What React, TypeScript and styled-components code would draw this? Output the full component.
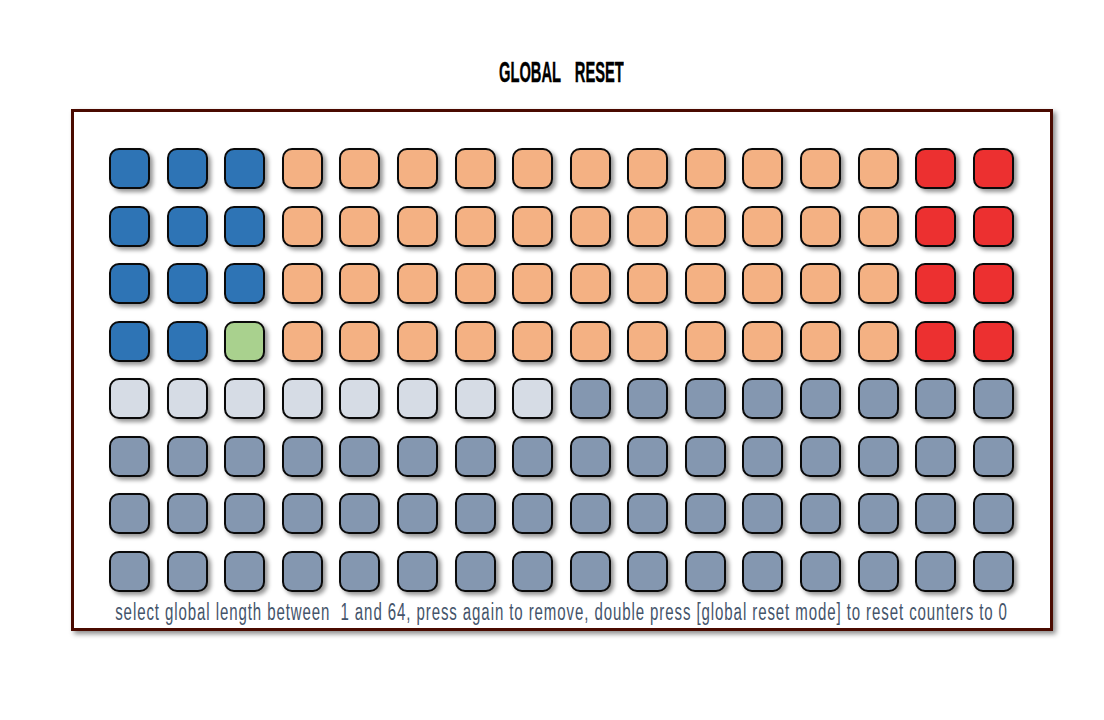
import React from "react";
import styled, { createGlobalStyle } from "styled-components";

const Global = createGlobalStyle`
  html, body { margin: 0; padding: 0; background: #fff; }
  #root { width: 1104px; height: 720px; overflow: hidden; }
`;

const Page = styled.main`
  width: 1104px;
  height: 720px;
  display: flex;
  flex-direction: column;
  align-items: center;
  padding: 57px 52px 0 71px;
  box-sizing: border-box;
`;

const Title = styled.h1`
  margin: 0 0 22px;
  height: 30px;
  line-height: 30px;
  font-family: "Liberation Sans Narrow", "Liberation Sans", sans-serif;
  font-size: 30px;
  font-weight: 700;
  color: #000;
  white-space: pre;
  word-spacing: 6px;
  -webkit-text-stroke: 0.4px #000;
  transform: scaleX(0.49);
`;

const Frame = styled.section`
  width: 982px;
  height: 522px;
  box-sizing: border-box;
  border: 3px solid #4a0a00;
  box-shadow: 3px 3px 5px rgba(0, 0, 0, 0.45);
  padding: 36px 35.6px 0 35.4px;
  display: flex;
  flex-direction: column;
  align-items: center;
`;

const Grid = styled.div`
  display: grid;
  grid-template-columns: repeat(16, 41px);
  grid-auto-rows: 41px;
  column-gap: 16.6px;
  row-gap: 16.55px;
`;

const colours = {
  blue: "#2e74b5",
  orange: "#f4b183",
  red: "#ec3030",
  green: "#a9d18e",
  light: "#d6dce5",
  slate: "#8497b0",
};
type Kind = keyof typeof colours;

const Pad = styled.button<{ $kind: Kind }>`
  padding: 0;
  box-sizing: border-box;
  border: 2px solid #0a0a0a;
  border-radius: 10px;
  background: ${(p) => colours[p.$kind]};
  box-shadow: 3px 3px 4px rgba(0, 0, 0, 0.42);
`;

const Hint = styled.p`
  margin: 8px 0 0;
  height: 24px;
  line-height: 24px;
  font-family: "Liberation Sans Narrow", "Liberation Sans", sans-serif;
  font-size: 23px;
  letter-spacing: 1.4px;
  color: #44546a;
  white-space: pre;
  transform: scaleX(0.653);
`;

const kindAt = (row: number, col: number): Kind => {
  const i = row * 16 + col;
  if (i === 50) return "green";
  if (row < 4) return col < 3 ? "blue" : col < 14 ? "orange" : "red";
  if (i < 72) return "light";
  return "slate";
};

const cells = Array.from({ length: 128 }, (_, i) => kindAt(Math.floor(i / 16), i % 16));

export default function App() {
  return (
    <Page>
      <Global />
      <Title>GLOBAL  RESET</Title>
      <Frame>
        <Grid>
          {cells.map((k, i) => (
            <Pad key={i} $kind={k} />
          ))}
        </Grid>
        <Hint>select global length between  1 and 64, press again to remove, double press [global reset mode] to reset counters to 0</Hint>
      </Frame>
    </Page>
  );
}
